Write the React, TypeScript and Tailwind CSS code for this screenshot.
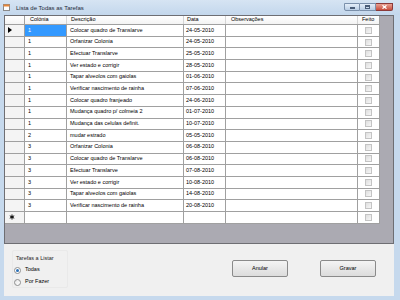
import React from 'react';

const rows: [string, string, string][] = [
    ['1', 'Colocar quadro de Translarve', '24-05-2010'],
    ['1', 'Orfanizar Colonia', '24-05-2010'],
    ['1', 'Efectuar Translarve', '25-05-2010'],
    ['1', 'Ver estado e corrigir', '28-05-2010'],
    ['1', 'Tapar alveolos com gaiolas', '01-06-2010'],
    ['1', 'Verificar nascimento de rainha', '07-06-2010'],
    ['1', 'Colocar quadro franjeado', '24-06-2010'],
    ['1', 'Mudança quadro p/ colmeia 2', '01-07-2010'],
    ['1', 'Mudança das celulas definit.', '10-07-2010'],
    ['2', 'mudar estrado', '05-05-2010'],
    ['3', 'Orfanizar Colonia', '06-08-2010'],
    ['3', 'Colocar quadro de Translarve', '06-08-2010'],
    ['3', 'Efectuar Translarve', '07-08-2010'],
    ['3', 'Ver estado e corrigir', '10-08-2010'],
    ['3', 'Tapar alveolos com gaiolas', '14-08-2010'],
    ['3', 'Verificar nascimento de rainha', '20-08-2010'],
];

const Check: React.FC = () => (
    <div className="w-[7px] h-[7px] border border-[#c4c4c4] bg-linear-to-br from-[#dedede] to-[#f7f7f7]" />
);

const Row: React.FC<{ data?: [string, string, string]; index: number; isNew?: boolean }> = ({ data, index, isNew }) => {
    const first = index === 0;
    return (
        <div className="flex h-[11.7px] border-b border-[#a0a0a0] bg-white">
            {/* row header */}
            <div className="w-[20px] shrink-0 border-r border-[#a0a0a0] bg-[#f4f4f4] flex items-center pl-[3px]">
                {first && (
                    <svg width="4" height="6" viewBox="0 0 4 6"><path d="M0 0 L4 3 L0 6 Z" fill="#000" /></svg>
                )}
                {isNew && (
                    <svg width="6" height="6" viewBox="0 0 6 6" className="ml-[1px]">
                        <path d="M3 0.5 V5.5 M0.8 1.8 L5.2 4.2 M0.8 4.2 L5.2 1.8" stroke="#000" strokeWidth="1" />
                    </svg>
                )}
            </div>
            <div className={`w-[42px] shrink-0 border-r border-[#a0a0a0] flex items-center pl-[3px] ${first ? 'bg-[#3399ff] text-white' : ''}`}>
                {data?.[0]}
            </div>
            <div className="w-[117px] shrink-0 border-r border-[#a0a0a0] flex items-center pl-[3px]">{data?.[1]}</div>
            <div className="w-[42px] shrink-0 border-r border-[#a0a0a0] flex items-center pl-[2px]">{data?.[2]}</div>
            <div className="w-[132px] shrink-0 border-r border-[#a0a0a0]" />
            <div className="w-[22px] shrink-0 border-r border-[#a0a0a0] flex items-center justify-center">
                <Check />
            </div>
        </div>
    );
};

const App: React.FC = () => {
    return (
        <div className="w-[400px] h-[300px] flex flex-col bg-[#c6d9ed] overflow-hidden font-['Liberation_Sans',Arial,sans-serif] text-black">
            {/* title bar */}
            <div className="h-[15px] shrink-0 flex items-center bg-linear-to-b from-[#d6e4f3] to-[#c3d7ec]">
                <svg width="7" height="7" viewBox="0 0 7 7" className="ml-[3px]">
                    <rect x="0.5" y="0.5" width="6" height="6" fill="#fff" stroke="#8a8a8a" strokeWidth="1" />
                    <rect x="0.5" y="0.5" width="6" height="2" fill="#e8873a" />
                </svg>
                <span className="ml-[6px] text-[6px] leading-none text-[#1e2a3a]">Lista de Todas as Tarefas</span>
                <div className="ml-auto mr-[7px] flex items-start self-start mt-[3px]">
                    <div className="w-[16px] h-[8px] border border-[#7b90ab] rounded-bl-[2px] bg-linear-to-b from-[#e4eef9] to-[#b9cde4] flex items-center justify-center">
                        <div className="w-[5px] h-[1.5px] bg-[#4a5d78] mt-[2px]" />
                    </div>
                    <div className="w-[16px] h-[8px] border-y border-r border-[#7b90ab] bg-linear-to-b from-[#e4eef9] to-[#b9cde4] flex items-center justify-center">
                        <div className="w-[5px] h-[4px] border border-[#4a5d78] border-t-2" />
                    </div>
                    <div className="w-[17px] h-[8px] border-y border-r border-[#8b3a3a] rounded-br-[2px] bg-linear-to-b from-[#e8a093] to-[#c74b3c] flex items-center justify-center">
                        <svg width="5" height="4" viewBox="0 0 5 4"><path d="M0.5 0.3 L4.5 3.7 M4.5 0.3 L0.5 3.7" stroke="#fff" strokeWidth="1.2" /></svg>
                    </div>
                </div>
            </div>

            <div className="flex-1 flex pl-[4px] pr-[6px] pb-[4px]">
                <div className="flex-1 flex flex-col bg-[#f0f0f0]">
                    {/* grid */}
                    <div className="h-[229px] shrink-0 bg-[#abaab2] border border-[#6e6e73] text-[5.5px] leading-none">
                        <div className="w-[375px] flex flex-col">
                            <div className="flex h-[9px] border-b border-[#a0a0a0] bg-linear-to-b from-white to-[#f3f3f3]">
                                <div className="w-[20px] shrink-0 border-r border-[#a0a0a0]" />
                                <div className="w-[42px] shrink-0 border-r border-[#d5d5d5] flex items-center pl-[5px]">Colónia</div>
                                <div className="w-[117px] shrink-0 border-r border-[#d5d5d5] flex items-center pl-[4px]">Descrição</div>
                                <div className="w-[42px] shrink-0 border-r border-[#d5d5d5] flex items-center pl-[3px]">Data</div>
                                <div className="w-[132px] shrink-0 border-r border-[#d5d5d5] flex items-center pl-[5px]">Observações</div>
                                <div className="w-[22px] shrink-0 border-r border-[#a0a0a0] flex items-center pl-[4px]">Feito</div>
                            </div>
                            {rows.map((r, i) => (
                                <Row key={i} data={r} index={i} />
                            ))}
                            <Row index={-1} isNew />
                        </div>
                    </div>

                    {/* bottom panel */}
                    <div className="flex-1 flex items-start text-[5.5px] leading-none">
                        <div className="ml-[8px] mt-[6px] w-[56px] h-[38px] border border-[#e9e9e9] rounded-[2px] flex flex-col pl-[3px] pt-[5px]">
                            <span className="text-[#1e1e1e]">Tarefas a Listar</span>
                            <div className="flex items-center mt-[5px] -ml-[2px]">
                                <div className="w-[7px] h-[7px] rounded-full border border-[#8e8f8f] bg-white flex items-center justify-center">
                                    <div className="w-[3px] h-[3px] rounded-full bg-[#2a6fb5]" />
                                </div>
                                <span className="ml-[4px]">Todas</span>
                            </div>
                            <div className="flex items-center mt-[5px] -ml-[2px]">
                                <div className="w-[7px] h-[7px] rounded-full border border-[#8e8f8f] bg-linear-to-br from-[#e6e6e6] to-white" />
                                <span className="ml-[4px]">Por Fazer</span>
                            </div>
                        </div>
                        <div className="ml-auto mt-[16px] mr-[18px] flex gap-[32px]">
                            <button className="w-[56px] h-[17px] border border-[#8a8a8a] rounded-[2px] bg-linear-to-b from-[#f4f4f4] to-[#dcdcdc] text-[5.5px]">Anular</button>
                            <button className="w-[56px] h-[17px] border border-[#8a8a8a] rounded-[2px] bg-linear-to-b from-[#f4f4f4] to-[#dcdcdc] text-[5.5px]">Gravar</button>
                        </div>
                    </div>
                </div>
            </div>
        </div>
    );
};

export default App;
